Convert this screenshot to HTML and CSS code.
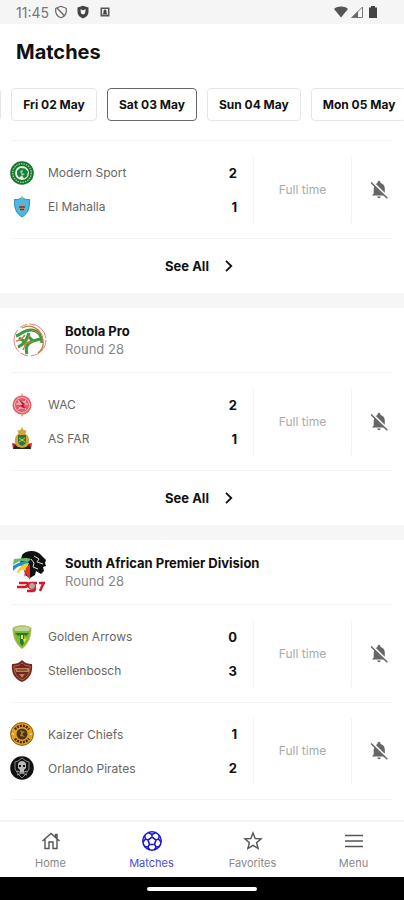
FILE: index.html
```
<!DOCTYPE html>
<html lang="en">
<head>
    <meta charset="UTF-8">
    <meta name="viewport" content="width=device-width, initial-scale=1.0">
    <title>Matches</title>
    <link rel="stylesheet" href="styles.css">
</head>
<body>

    <svg class="sprite" aria-hidden="true">
        <symbol id="bellOff" viewBox="0 0 20 20">
            <path fill="#666" d="M3 15.500 4.700 13.500V8.500L5.300 6 15 15.500zM8.300 16.500h3.400a1.700 1.700 0 0 1-3.400 0zM6.800 4 8.500 3V2.300a1.500 1.500 0 0 1 3 0V3C14.300 3.800 15.800 6 15.800 8.600v4.200z"/>
            <path stroke="#666" stroke-width="1.600" d="M2 2.500 18.300 18.300"/>
        </symbol>
        <symbol id="chevron" viewBox="0 0 12 12">
            <path fill="none" stroke="#111" stroke-width="1.800" d="M3 .800 8.300 6 3 11.200"/>
        </symbol>
    </svg>

    <div class="statusBar">
        <span class="clock">11:45</span>
        <svg class="statusIcon" viewBox="0 0 14 14" fill="none" stroke="#666" stroke-width="1.200"><path d="M7 1.300C9 2.300 11 2.500 12.300 3.500 12.800 8 11 11.500 7 12.700 3 11.500 1.200 8 1.700 3.500 3 2.500 5 2.300 7 1.300z"/><path d="M3 3 10.500 11"/></svg>
        <svg class="statusIcon" viewBox="0 0 14 14"><path fill="#444" d="M7 .800 12.500 2.600V7c0 3-2.200 5.300-5.500 6.400C3.700 12.300 1.500 10 1.500 7V2.600z"/><path fill="#f5f5f5" d="M4.500 4.300 7 5.300 9.700 4.300 9 8.500 7 9.500 5 8.500z"/></svg>
        <svg class="statusIcon" viewBox="0 0 14 14"><path fill="#555" d="M2.500 2.500h9v9h-9z"/><path fill="#eee" d="M4 4h6v6H4z"/><path fill="#444" d="M4 9.500 5.500 8V6a1.500 1.500 0 0 1 3 0v2L10 9.500z"/></svg>
        <span class="spacer"></span>
        <svg class="statusIcon" viewBox="0 0 14 14"><path fill="#555" d="M0 4C4 .800 10 .800 14 4L7 12.500z"/></svg>
        <svg class="statusIcon" viewBox="0 0 14 14"><path fill="#666" d="M1 13 8 6v7z"/><path fill="none" stroke="#777" d="M2 12.500 12.500 2v10.500z"/></svg>
        <svg class="statusIcon battery" viewBox="0 0 14 14"><path fill="#444" d="M5 1h4v1.500h2V13H3V2.500h2z"/></svg>
    </div>

    <header>
        <h1>Matches</h1>
        <div class="dates">
            <button class="date" aria-label="Previous day"></button>
            <button class="date">Fri 02 May</button>
            <button class="date selected">Sat 03 May</button>
            <button class="date">Sun 04 May</button>
            <button class="date">Mon 05 May</button>
        </div>
    </header>

    <main>
        <section class="league">
            <div class="match">
                <div class="teams">
                    <div class="team">
                        <svg class="crest" viewBox="0 0 24 24"><circle cx="12" cy="12" r="11.800" fill="#12752a"/><circle cx="12" cy="12" r="9.300" fill="none" stroke="#a9cfae" stroke-width="1.300" stroke-dasharray="1.500 1"/><circle cx="12" cy="12" r="7" fill="#e4efe0"/><path fill="#18813a" d="M7 10 10 7l5 .5 3 3-1 5-3 2-2-3-3 2-2-3z"/><path fill="#a4cda8" d="m10 10 3-1-1 3 3 1-3 2z"/></svg>
                        <span class="teamName">Modern Sport</span><span class="score">2</span>
                    </div>
                    <div class="team">
                        <svg class="crest" viewBox="0 0 24 24"><path fill="#4cb8e8" stroke="#2492bb" d="M4.500 4.500C8 5 10 4 12 2c2 2 4 3 7.500 2.500.5 8-1.500 14-7.500 17.500C6 18.500 4 12.500 4.500 4.500z"/><path fill="#e8b44c" d="m12 0 1 3-1 1-1-1z"/><circle cx="12" cy="12.500" r="3.500" fill="#b99a70"/><path stroke="#354b5a" stroke-width="1.300" d="M9 12h6M10 14.500h4"/></svg>
                        <span class="teamName">El Mahalla</span><span class="score">1</span>
                    </div>
                </div>
                <div class="status">Full time</div>
                <button class="bell" aria-label="Turn on notifications"><svg><use href="#bellOff"/></svg></button>
            </div>
            <a class="seeAll" href="#">See All <svg><use href="#chevron"/></svg></a>
        </section>

        <section class="league">
            <div class="leagueHeader">
                <svg class="leagueLogo" viewBox="0 0 36 44"><circle cx="18" cy="22" r="16" fill="none" stroke="#e88080" stroke-dasharray="24 3 8 2"/><path fill="none" stroke="#389b3c" stroke-width="3" d="M4 18c5-1 8-7 16-6 7 1 10 7 10 13M6 29c5-2 9-7 11-14M15 17l6 6 7-2M21 23c-6 2-8 6-6 13M7 20l8 5"/><path fill="none" stroke="#c77c3d" stroke-width="1.300" d="M10 10c9-5 20 1 21 13 1 6-1 9-5 12M18 17l-5 9 9-3M4 23c4 0 6-2 9-6M11 32l3-7M20 12l8 4"/></svg>
                <div>
                    <h2>Botola Pro</h2>
                    <p>Round 28</p>
                </div>
            </div>
            <div class="match">
                <div class="teams">
                    <div class="team">
                        <svg class="crest" viewBox="0 0 24 24"><circle cx="12" cy="12" r="9.500" fill="#e45b6a"/><circle cx="12" cy="12" r="7.500" fill="none" stroke="#f8b9bd"/><path fill="none" stroke="#fbd5d5" d="m8 7 8 10M16 7 8 17M6 11h12M9 15h6M8 9l8 0"/><path stroke="#bf2840" stroke-width="1.500" d="m10 8 4 3-3 2 4 2"/><path fill="#e6ad65" d="m12 0 1.500 3h-3zM10 21h4l-2 3z"/></svg>
                        <span class="teamName">WAC</span><span class="score">2</span>
                    </div>
                    <div class="team">
                        <svg class="crest" viewBox="0 0 24 24"><path fill="#c52b2b" d="m2 16 5 1v4l-4 1zM22 16l-5 1v4l4 1z"/><path fill="#26251f" d="M5 18c5 3 9 3 14 0l2 4H3z"/><path fill="#d3a33d" d="m12 0 1.500 3 3 .5-1 3c4 3 5 8 2 12-3 3-8 3-11 0-3-4-2-9 2-12l-1-3 3-.5z"/><path fill="#277b35" d="M8 8h8v6c0 3-2 4-4 5-2-1-4-2-4-5z"/><path fill="none" stroke="#d9cb63" d="m9 11 6 4M15 11l-6 4"/></svg>
                        <span class="teamName">AS FAR</span><span class="score">1</span>
                    </div>
                </div>
                <div class="status">Full time</div>
                <button class="bell" aria-label="Turn on notifications"><svg><use href="#bellOff"/></svg></button>
            </div>
            <a class="seeAll" href="#">See All <svg><use href="#chevron"/></svg></a>
        </section>

        <section class="league">
            <div class="leagueHeader">
                <svg class="leagueLogo" viewBox="0 0 36 44"><path fill="#111" d="M10 5C14 0 25-1 30 6l4 4-1 3 1 3-3 1 1 4-3 3-5-3-1 4-5 3-5-3-1-7-4-5z"/><path fill="none" stroke="#ddd" d="m22 6 5 3-2 3 6 2M19 9l3 4-1 4 5 2"/><path fill="#65bd61" d="M2 9c7 0 10-2 17 0l-4 4C9 9 6 12 1 15z"/><path fill="#248dce" d="M1 16c7-4 10-6 16-4l-4 5C8 14 5 17 1 21z"/><path fill="#efcf29" d="M5 22c3-6 7-9 12-9l-3 8c-4-2-6-1-8 3z"/><path fill="#e53231" d="m18 14 0 16-4-6-2 3 2-9z"/><path fill="none" stroke="#d81827" stroke-width="2.500" d="M7 33h8c2 0 0 4-2 4H5M25 33h-6c-3 0-4 4-1 4h4c2 0 1 4-1 4h-6M32 32l-4 9M27 33h6"/><circle cx="20" cy="36" r="3.500" fill="#aaa" stroke="#d81827"/></svg>
                <div>
                    <h2>South African Premier Division</h2>
                    <p>Round 28</p>
                </div>
            </div>
            <div class="match">
                <div class="teams">
                    <div class="team">
                        <svg class="crest" viewBox="0 0 24 24"><path fill="#83b932" stroke="#bdb65b" d="M3 3C8 0 16 0 21 3c0 9-3 16-9 20.500C6 19 3 12 3 3z"/><path fill="#bed59c" d="M4 3c5-2 11-2 16 0l-1 3H5z"/><path fill="#217b36" d="M5 8h14l-3 3-2-1v8l-2 3-2-3v-8l-2 1z"/><path fill="#e9df46" d="m7 13 3 5M17 13l-3 5-1-4zM11 10h2v4h-2z"/></svg>
                        <span class="teamName">Golden Arrows</span><span class="score">0</span>
                    </div>
                    <div class="team">
                        <svg class="crest" viewBox="0 0 24 24"><path fill="#752526" d="M2 5c4 0 7-1 10-4 3 3 6 4 10 4 1 8-2 15-10 18C4 20 1 13 2 5z"/><path fill="none" stroke="#a8703f" d="M4 7c4 0 6-1 8-3 2 2 4 3 8 3 0 6-2 11-8 14C6 18 4 13 4 7z"/><path fill="#b68450" d="M5 9h14v4H6zM9 15h6l-3 4z"/><path stroke="#65201f" d="M7 11h10M10 6h4"/></svg>
                        <span class="teamName">Stellenbosch</span><span class="score">3</span>
                    </div>
                </div>
                <div class="status">Full time</div>
                <button class="bell" aria-label="Turn on notifications"><svg><use href="#bellOff"/></svg></button>
            </div>
            <div class="match">
                <div class="teams">
                    <div class="team">
                        <svg class="crest" viewBox="0 0 24 24"><circle cx="12" cy="12" r="11.800" fill="#e5a01c"/><circle cx="12" cy="12" r="11.300" fill="none" stroke="#8a641c"/><path fill="none" stroke="#3c2c16" stroke-width="2.500" stroke-dasharray="2 1" d="M5 7.500a8.500 8.500 0 0 1 14 0M5 16.500a8.500 8.500 0 0 0 14 0"/><circle cx="12" cy="12" r="5.500" fill="#49331b"/><path fill="#b07a26" d="m10 8 5 2-3 2 3 3-5-1 1-3z"/><path fill="#ddd" d="m1 12 3-1v2zM23 12l-3-1v2z"/></svg>
                        <span class="teamName">Kaizer Chiefs</span><span class="score">1</span>
                    </div>
                    <div class="team">
                        <svg class="crest" viewBox="0 0 24 24"><circle cx="12" cy="12" r="11.800" fill="#111"/><path fill="none" stroke="#888" d="m12 2 4 3 3 1v7l-3 5-4 4-4-4-3-5V6l3-1z"/><path fill="#bbb" d="M8 8c1-4 7-4 8 0v4l-2 2v2h-4v-2l-2-2z"/><path fill="#111" d="M9 9h2v2H9zM13 9h2v2h-2z"/><path stroke="#aaa" d="m7 15 10 4M17 15 7 19"/></svg>
                        <span class="teamName">Orlando Pirates</span><span class="score">2</span>
                    </div>
                </div>
                <div class="status">Full time</div>
                <button class="bell" aria-label="Turn on notifications"><svg><use href="#bellOff"/></svg></button>
            </div>
        </section>
    </main>

    <nav>
        <a href="#">
            <svg viewBox="0 0 20 20" fill="none" stroke="#555" stroke-width="1.400"><path d="M1.500 10 10 2.500 18.500 10M4 8v9.500h4V11h4v6.500h4V8M14.500 6V3.500H16v4"/></svg>
            Home
        </a>
        <a class="active" href="#">
            <svg viewBox="0 0 20 20" fill="none" stroke="#1c1cc8" stroke-width="1.600"><circle cx="10" cy="10" r="9.200"/><path d="m10 6 4 3-1.500 4.500h-5L6 9zM10 6V3.500L6.500 1.700M10 3.500l3.500-1.800M14 9l2.500-1 1-3.500M16.500 8l2.500 3M12.500 13.500l1.700 2.500 3.300-.5M14.200 16l-2 3M7.500 13.500 5.800 16l-3.300-.5M5.800 16l2 3M6 9 3.500 8l-1-3.500M3.500 8 1 11"/></svg>
            Matches
        </a>
        <a href="#">
            <svg viewBox="0 0 20 20" fill="none" stroke="#555" stroke-width="1.400"><path d="m10 2 2.200 5.500 5.900.4-4.500 3.800 1.500 5.800-5.100-3.200-5.100 3.200 1.500-5.800L1.900 7.900l5.900-.4z"/></svg>
            Favorites
        </a>
        <a href="#">
            <svg viewBox="0 0 20 20" stroke="#555" stroke-width="1.600"><path d="M1 4.500h18M1 10h18M1 15.500h18"/></svg>
            Menu
        </a>
    </nav>

    <div class="gestureBar"><span></span></div>

</body>
</html>
```
FILE: styles.css
```
* {
    box-sizing: border-box;
}

body {
    font-family: 'Inter', 'Liberation Sans', sans-serif;
    margin: 0;
    height: 100vh;
    display: flex;
    flex-direction: column;
    background-color: #fff;
    color: #111;
    overflow: hidden;
}

h1, h2, p {
    margin: 0;
}

button {
    font-family: inherit;
    background: none;
    cursor: pointer;
}

a {
    color: inherit;
    text-decoration: none;
}

.sprite {
    position: absolute;
    width: 0;
    height: 0;
}

.statusBar {
    display: flex;
    align-items: center;
    flex-shrink: 0;
    height: 24px;
    padding: 0 24px 0 16px;
    background-color: #f5f5f5;
}

.clock {
    font-size: 14px;
    color: #777;
    margin-right: 5px;
}

.statusIcon {
    width: 14px;
    height: 14px;
    margin-right: 8px;
}

.spacer {
    flex: 1;
}

.spacer ~ .statusIcon {
    margin-right: 2px;
}

.statusBar .battery {
    margin-right: 0;
}

header {
    flex-shrink: 0;
    padding-bottom: 19px;
    overflow: hidden;
}

h1 {
    font-size: 20px;
    line-height: 24px;
    padding: 16px 16px 24px;
}

/* the strip starts scrolled, with the previous day almost out of view */
.dates {
    display: flex;
    gap: 10px;
    margin-left: -85px;
}

.date {
    flex-shrink: 0;
    min-width: 86px;
    height: 33px;
    padding: 0 11px;
    border: 1px solid #e6e6e6;
    border-radius: 4px;
    font-size: 12px;
    font-weight: bold;
    color: #111;
}

.date.selected {
    border-color: #666;
}

main {
    flex: 1;
    min-height: 0;
    overflow: hidden;
}

.league + .league {
    border-top: 15px solid #f6f6f6;
}

.league:last-child .match:last-child {
    border-bottom: 1px solid #f3f3f3;
}

.leagueHeader {
    display: flex;
    align-items: center;
    gap: 17px;
    height: 64px;
    padding: 0 12px;
}

.leagueLogo {
    width: 36px;
    height: 44px;
}

h2 {
    font-size: 13px;
    line-height: 18px;
}

.leagueHeader p {
    font-size: 13px;
    line-height: 18px;
    color: #888;
}

.match {
    display: flex;
    align-items: center;
    height: 98px;
    margin: 0 12px;
    border-top: 1px solid #f3f3f3;
}

.teams {
    flex: 1;
}

.team {
    display: flex;
    align-items: center;
    height: 34px;
    padding-right: 16px;
}

.crest {
    width: 24px;
    height: 24px;
    margin-left: -2px;
}

.teamName {
    flex: 1;
    margin-left: 14px;
    font-size: 12px;
    color: #666;
}

.score {
    font-size: 13px;
    font-weight: bold;
}

.status {
    width: 99px;
    padding: 26px 0;
    border: solid #f3f3f3;
    border-width: 0 1px;
    font-size: 12px;
    line-height: 14px;
    text-align: center;
    color: #aaa;
}

.bell {
    display: flex;
    justify-content: center;
    width: 40px;
    padding: 0 0 0 13px;
    border: none;
}

.bell svg {
    width: 20px;
    height: 20px;
}

.seeAll {
    display: flex;
    align-items: center;
    justify-content: center;
    gap: 14px;
    height: 55px;
    margin: 0 12px;
    padding-right: 4px;
    border-top: 1px solid #f3f3f3;
    font-size: 13px;
    font-weight: bold;
}

.seeAll svg {
    width: 12px;
    height: 12px;
}

nav {
    display: flex;
    flex-shrink: 0;
    height: 57px;
    border-top: 2px solid #f2f2f2;
}

nav a {
    flex: 1;
    display: flex;
    flex-direction: column;
    align-items: center;
    gap: 4px;
    padding-top: 9px;
    font-size: 11px;
    line-height: 16px;
    color: #888;
}

nav a.active {
    color: #4b4bdd;
}

nav svg {
    width: 20px;
    height: 20px;
}

.gestureBar {
    display: flex;
    align-items: center;
    justify-content: center;
    flex-shrink: 0;
    height: 23px;
    background-color: #000;
}

.gestureBar span {
    width: 27%;
    height: 4px;
    border-radius: 2px;
    background-color: #fff;
}
```
